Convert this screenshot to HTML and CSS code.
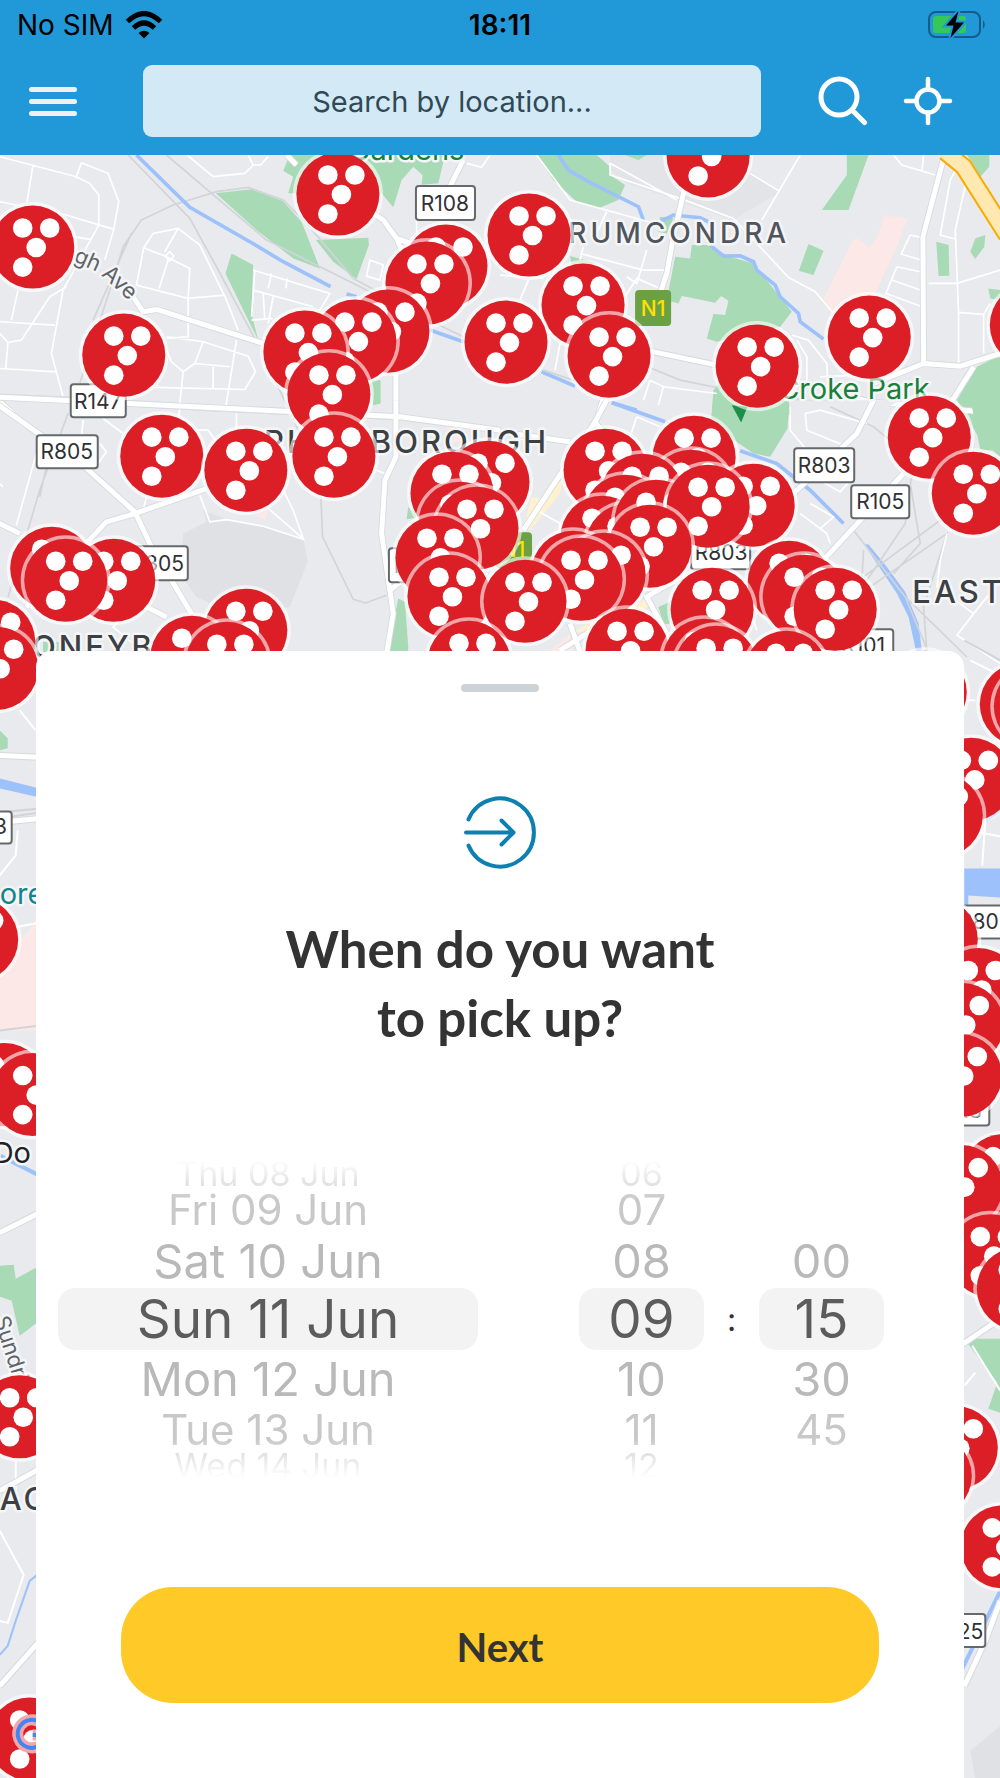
FILE: index.html
```html
<!DOCTYPE html>
<html lang="en">
<head>
<meta charset="utf-8">
<meta name="viewport" content="width=device-width, initial-scale=1">
<title>Pick up time</title>
<link rel="stylesheet" href="styles.css">
</head>
<body>
<div class="app">
  <header class="topbar">
    <div class="status">
      <div class="status-left">
        <span>No SIM</span>
        <svg width="38" height="28" viewBox="0 0 38 28" aria-hidden="true">
          <path d="M19 27.500L13.500 22Q19 17.500 24.500 22Z"/>
          <path class="arc" d="M2.500 10.500Q19 -5.500 35.500 10.500M8.500 17Q19 7 29.500 17"/>
        </svg>
      </div>
      <span class="clock">18:11</span>
      <div class="status-right">
        <svg width="56" height="30" viewBox="0 0 56 30" aria-hidden="true">
          <rect x="2" y="2" width="51" height="25" rx="7" fill="none" stroke="#155d87" stroke-width="2"/>
          <path d="M56 10Q59.500 14.500 56 19Z" fill="#155d87"/>
          <rect x="6" y="6" width="33" height="17" rx="3" fill="#34c759"/>
          <path d="M31.500 1L19 15.500H26.500L23.500 28L37 12.500H28.500Z" fill="#000" stroke="#2199d8" stroke-width="4" paint-order="stroke"/>
        </svg>
      </div>
    </div>
    <div class="searchbar">
      <button class="icon-button" type="button" aria-label="Menu">
        <svg width="48" height="30" viewBox="0 0 48 30"><path d="M2.500 3.500H45.500M2.500 15.500H45.500M2.500 27.500H45.500" stroke="#f0f0f0" stroke-width="5" stroke-linecap="round"/></svg>
      </button>
      <input class="search" type="text" aria-label="Search by location" placeholder="Search by location...">
      <div class="actions">
        <button class="icon-button" type="button" aria-label="Search">
          <svg width="50" height="50" viewBox="0 0 50 50" fill="none" stroke="#fff" stroke-width="5" stroke-linecap="round"><circle cx="21" cy="21" r="18"/><path d="M34.500 34.500L46.500 46.500"/></svg>
        </button>
        <button class="icon-button" type="button" aria-label="My location">
          <svg width="50" height="50" viewBox="0 0 50 50" fill="none" stroke="#fff" stroke-width="4.500" stroke-linecap="round"><circle cx="25" cy="25" r="11.500"/><path d="M25 3V13M25 37V47M3 25H13M37 25H47"/></svg>
        </button>
      </div>
    </div>
  </header>

  <main class="stage">
    <svg class="map" viewBox="0 155 1000 1623" preserveAspectRatio="xMidYMin slice" aria-label="Map of pick-up points">
      <defs>
        <g id="pin">
          <circle r="45" fill="#fff" opacity=".6"/>
          <circle r="41.500" fill="#dc1f26"/>
          <g fill="#fff"><circle cx="-10" cy="-19" r="9.800"/><circle cx="17" cy="-19" r="9.800"/><circle cx="3.500" cy="0.500" r="9.800"/><circle cx="-10" cy="20" r="9.800"/></g>
        </g>
      </defs>
      <rect y="155" width="1000" height="1623" fill="#e8eaed"/>

      <!-- north west -->
      <g transform="translate(0 150) scale(.33333)">
        <path class="park" d="M648 130L755 118L848 152L905 215L960 355L880 325L770 240ZM948 270L1105 263L1107 285L1070 387L1000 335ZM695 310L760 345L755 490L775 570L750 520L677 370ZM870 15L850 62L880 80L865 130H1145L1180 172L1205 90L1240 50L1268 75L1265 104L1315 100L1335 15ZM1110 690L1142 690V760L1120 765Z"/>
        <path class="rail" d="M385 15L570 205L650 350L770 575M500 15L800 270L1100 420L1390 560M240 700L330 420L370 290L425 210L520 165L650 125L745 112L850 150L920 220L1060 385L1180 450M280 510L395 250M830 700L900 850"/>
        <path class="river" d="M410 15L570 172L750 275L850 335L992 410M1040 432L1070 440M1290 540L1390 575"/>
        <path class="street" d="M0 20L230 80L270 100L297 135V225L275 265L190 420L155 610L190 740M100 45L82 155M245 38L228 85M245 38L325 70L357 155L342 238L315 330M0 155L200 195L342 238M0 230L275 268M0 515L165 525M0 655L170 665M55 420L35 510M200 410L150 440L65 570L25 577L0 550M25 577L18 655M562 15L640 80L735 70L760 45L745 15M760 45L782 45L805 20M432 293L460 250L535 235L600 285L680 450L715 540M432 293L410 405L565 445V560L500 565M432 293L495 318L570 355L565 445L675 435M505 330L478 415M495 305L535 235M510 305L522 318L510 332L496 318ZM500 560L610 575L585 640L550 665L515 635L500 600M610 575L745 618L767 665L735 718L400 710M585 640L690 650M640 650V715M710 570L678 770M550 665L540 760M760 360L990 430L960 480M760 420L940 470M765 360L755 500M790 430L795 510M820 440L805 520M815 370L805 415M862 385L858 415M755 510L820 505M1110 330L1150 345L1140 390L1100 378ZM1250 210V260M1400 40L1445 52L1470 15"/>
        <path class="casing" d="M-20 740L230 750L650 775L1200 800M400 440L430 485L470 478L790 580M860 15L890 45M1120 190L1150 210L1190 265L1260 290M1190 265L1225 350M1390 30L1350 110M1188 670V800M0 755L40 790"/>
        <path class="road" d="M-20 740L230 750L650 775L1200 800M400 440L430 485L470 478L790 580M860 15L890 45M1120 190L1150 210L1190 265L1260 290M1190 265L1225 350M1390 30L1350 110M1188 670V800M0 755L40 790"/>
      </g>

      <!-- north east -->
      <g transform="translate(500 150) scale(.33333)">
        <path d="M330 15H700L745 60L840 125L700 210L380 100L330 60Z" fill="#e2e4e7"/>
        <path class="park" d="M110 15H290L330 50V75L375 105L355 150L295 175L230 155L160 90ZM375 15H440L415 30ZM1040 15H1105L1045 180H965L1040 75ZM925 282L970 302L940 375L896 362ZM1308 275L1345 285L1347 377L1315 378ZM1425 265L1455 255L1452 290L1425 327L1410 305ZM1400 15H1467V50L1440 80ZM525 320L570 325L575 285L620 285L690 320L760 340L875 485L840 530L650 575L620 565L640 492L675 495L685 452L663 438L645 458L545 438L535 460L500 450ZM640 720L700 640L830 735L880 780H635ZM1370 750L1430 650L1500 615V920L1440 870ZM1464 415L1500 420V450L1470 445ZM480 200L520 205L500 250L475 245ZM210 318L290 340L215 345Z"/>
        <path class="hospital" d="M1152 195L1222 207L1190 290L1120 440L1000 490L968 450L1058 270L1075 265L1107 292L1132 260Z"/>
        <path class="river" d="M175 15L205 60L265 95L415 170L430 210M480 215L520 195L600 203L630 218M630 285L670 318L720 317L760 335L770 360L825 405L840 440L895 490L900 515L970 567M125 665L225 708M335 757L410 780"/>
        <path class="street" d="M110 15L210 150L480 225M330 40V75L540 145L700 205L865 382L945 425L1000 490M330 40L530 150M900 15L785 210M750 70L840 125M1180 15L1205 45L1305 75M1265 65L1270 15M1230 255L1262 262M1230 255L1203 312L1262 330M1190 350L1260 365M1190 350L1157 430L1260 468M1175 390L1260 420M1390 15L1350 90L1320 255L1365 267M1410 40L1365 240L1375 490V640M1285 400H1370L1500 360M1375 487L1450 493V610M1450 493L1470 460M240 310L430 360L500 360M320 185L290 250M250 290L240 330M440 300L410 400L380 380M85 390L60 450M375 440L410 385L490 420M0 375L130 385M180 580L165 660M450 690L490 710L650 730M450 690L430 750M490 710L475 765M875 555L925 570L980 640L985 780M890 570L920 620V700M960 680L1170 670"/>
        <path class="rail" d="M455 655L540 690L650 712M130 660L250 700M1020 770L880 745"/>
        <path class="casing" d="M555 110L520 260L500 370L480 430M1330 25L1268 260L1270 640L1120 700M1270 640L1380 648L1500 610M450 603L650 645M1420 650L1350 760M310 745L295 790M1050 740L1110 755L1500 790"/>
        <path class="road" d="M555 110L520 260L500 370L480 430M1330 25L1268 260L1270 640L1120 700M1270 640L1380 648L1500 610M450 603L650 645M1420 650L1350 760M310 745L295 790M1050 740L1110 755L1500 790"/>
        <path class="highway-edge" d="M1335 5L1390 50L1520 255"/>
        <path class="highway" d="M1335 5L1390 50L1520 255"/>
      </g>

      <!-- south west -->
      <g transform="translate(0 400) scale(.33333)">
        <path d="M610 330L680 358L790 378L912 420L923 485L870 620L700 640L590 590L540 520L550 400L620 365Z" fill="#e0e1e5"/>
        <path class="park" d="M1195 595L1215 605L1225 740L1222 790H1162L1175 690ZM1225 320L1260 350L1220 357ZM130 725L190 725V760H130Z"/>
        <path class="hospital" d="M765 345L805 330L797 360ZM1340 80H1400L1390 120L1350 130Z"/>
        <path class="rail" d="M205 40L120 270L25 590M140 200L120 290M963 290L968 410L1060 597L1097 608L1160 585"/>
        <path class="street" d="M110 160L50 375M310 55L370 100M300 130L320 155L295 190M250 60L245 110M540 25L530 90L625 90L660 140M600 285L630 365L680 358L790 378L912 418M800 320L910 415L880 330L850 270M440 290L430 330M710 40V90M1130 210L1155 220M420 590L340 680L400 730M0 250L10 260"/>
        <path class="casing" d="M-10 10L250 195L405 335L455 440L575 640M-10 365L60 400M-20 -10L1200 50L1500 90M620 265L405 340L320 365L230 460L80 620M400 600L500 650M1188 0V170L1155 240L1145 400L1180 640L1155 790M1170 570L1220 530"/>
        <path class="road" d="M-10 10L250 195L405 335L455 440L575 640M-10 365L60 400M-20 -10L1200 50L1500 90M620 265L405 340L320 365L230 460L80 620M400 600L500 650M1188 0V170L1155 240L1145 400L1180 640L1155 790M1170 570L1220 530"/>
      </g>

      <!-- south east -->
      <g transform="translate(500 400) scale(.33333)">
        <path class="park" d="M640 0H1000L865 45L862 85L810 170L760 160L630 70ZM1415 20L1440 0H1500V150L1440 150ZM475 620L510 605V670L490 672Z"/>
        <path class="local" d="M95 290L120 295L190 235L180 280L90 390L70 380ZM380 630L440 595L450 615L400 650ZM210 700L280 660L270 690Z"/>
        <path class="hospital" d="M145 755L210 700L220 755Z"/>
        <path d="M865 0H1200L990 120L880 100Z" fill="#e8eaed"/>
        <path class="river" d="M335 8L495 65M720 152L830 190L930 270L1030 370"/>
        <path d="M1092 432L1105 433L1160 500L1215 575L1255 670L1265 755H1248L1225 650L1190 580Z" fill="#9dc1fa"/>
        <path class="rail" d="M990 20L1120 80L1240 180L1215 370L1100 540M1060 390L1215 590L1290 770M1090 530L1320 360M1110 560L1340 400L1270 620L1280 760M1090 450L1085 540M1230 250L1260 430L1180 520M1215 590L1400 770"/>
        <path class="street" d="M0 95L120 135M410 50L390 110M410 50L480 80M110 330L180 370L180 400M870 20V90L920 150M915 40L920 90L1030 135M915 40L960 30L1100 70M940 230L1020 275L1050 240M900 340L980 400L990 430M930 310L1000 350L960 385M1340 400L1320 480L1310 560L1420 640L1370 705L1500 790M1420 640L1500 540M760 660L770 690"/>
        <path class="casing" d="M320 0L285 65L70 390M285 65L310 100M0 95L210 125M1120 0L1070 100L880 280M1210 220L960 490M560 520L440 590L500 700M340 650L180 750M210 670L240 755"/>
        <path class="road" d="M320 0L285 65L70 390M285 65L310 100M0 95L210 125M1120 0L1070 100L880 280M1210 220L960 490M560 520L440 590L500 700M340 650L180 750M210 670L240 755"/>
        <path d="M695 15L723 67L742 20Z" fill="#1e8e4a"/>
      </g>

      <!-- strips beside the sheet -->
      <g>
        <path class="hospital" d="M32 926L40 910V1030H0V965Z"/>
        <path class="park" d="M0 730L8 738V748L0 750ZM0 1265L14 1264L16 1278L40 1265V1320L20 1335L12 1300L0 1296ZM964 1338H1000V1412L988 1408L997 1382Z"/>
        <path d="M964 868H1000V897L968 895V905H964Z" fill="#9dc1fa"/>
        <path class="water-edge" d="M0 778L40 788V797L0 788Z"/>
        <path class="river thin" d="M0 1155L40 1175M960 1672L1000 1590M985 820L1000 810"/>
        <path class="river brook" d="M0 1654L8 1645L16 1620L30 1580L40 1572"/>
        <path d="M970 1750L1000 1725V1778H975Z" fill="#dfe1e5"/>
        <path class="street thin" d="M20 710L36 730M18 830L16 855L0 875M0 930L40 922M0 1530L24 1574L8 1622L0 1620M16 1460V1490M970 830L1000 836M985 820L982 865M964 1385L975 1372M972 1345L1000 1390M975 700H964M970 660L1000 675"/>
        <path class="rail thin" d="M0 812L40 808M0 818L40 812M0 1030L40 1025M964 640L1000 660"/>
        <path class="casing thin" d="M0 755L40 757M0 822L40 818M0 1232L40 1212M0 1490L40 1468M0 1685L40 1640M960 1345L1000 1318M964 1685L985 1640L1000 1600"/>
        <path class="road thin" d="M0 755L40 757M0 822L40 818M0 1232L40 1212M0 1490L40 1468M0 1685L40 1640M960 1345L1000 1318M964 1685L985 1640L1000 1600"/>
      </g>

      <g class="labels">
        <text class="green" x="349" y="160">Gardens</text>
        <text class="green" x="778" y="399">Croke Park</text>
        <text class="teal" x="0" y="904">ore</text>
        <text class="district" x="790" y="243" text-anchor="end">DRUMCONDRA</text>
        <text class="area" x="549" y="453" text-anchor="end">PHIBSBOROUGH</text>
        <text class="area" x="912" y="603">EAST WALL</text>
        <text class="area" x="-13" y="658">STONEYBATTER</text>
        <text class="area" x="0" y="1509">AC</text>
        <text class="place" x="-7" y="1162">Do</text>
        <text class="street-name" transform="translate(73 261) rotate(24)">gh</text>
        <text class="street-name" transform="translate(101 275) rotate(42)">Ave</text>
        <text class="street-name" transform="translate(-6 1318) rotate(72)">Sundri</text>
      </g>

      <g class="shields">
        <rect x="416" y="186" width="59" height="34" rx="3"/><text x="445" y="211">R108</text>
        <rect x="71" y="384" width="55" height="33" rx="3"/><text x="98" y="409">R147</text>
        <rect x="37" y="435" width="61" height="33" rx="3"/><text x="67" y="459">R805</text>
        <rect x="127" y="546" width="61" height="34" rx="3"/><text x="158" y="571">R805</text>
        <rect x="389" y="548" width="61" height="34" rx="3"/><text x="420" y="573">R805</text>
        <rect x="794" y="448" width="60" height="34" rx="3"/><text x="824" y="473">R803</text>
        <rect x="851" y="485" width="58" height="33" rx="3"/><text x="880" y="509">R105</text>
        <rect x="691" y="535" width="59" height="34" rx="3"/><text x="721" y="560">R803</text>
        <rect x="834" y="629" width="59" height="34" rx="3"/><text x="863" y="653">R101</text>
        <rect x="-48" y="811" width="60" height="32" rx="3"/><text x="-19" y="834">R803</text>
        <rect x="948" y="905" width="62" height="33" rx="3"/><text x="985" y="929">R802</text>
        <rect x="930" y="1092" width="59" height="33" rx="3"/><text x="960" y="1117">R118</text>
        <rect x="925" y="1613" width="60" height="33" rx="3"/><text x="957" y="1638">R825</text>
        <g class="national"><rect x="635" y="290" width="36" height="36" rx="4"/><text x="653" y="316">N1</text></g>
        <g class="national"><rect x="496" y="532" width="36" height="36" rx="4"/><text x="513" y="557">N1</text></g>
      </g>

      <g>
        <use href="#pin" x="33" y="247"/><use href="#pin" x="338" y="194"/><use href="#pin" x="124" y="355"/>
        <use href="#pin" x="446" y="266"/><use href="#pin" x="427" y="283"/><use href="#pin" x="388" y="331"/>
        <use href="#pin" x="355" y="341"/><use href="#pin" x="305" y="352"/><use href="#pin" x="329" y="394"/>
        <use href="#pin" x="529" y="235"/><use href="#pin" x="708" y="156"/><use href="#pin" x="583" y="305"/>
        <use href="#pin" x="506" y="342"/><use href="#pin" x="609" y="356"/><use href="#pin" x="757" y="366"/>
        <use href="#pin" x="869" y="337"/><use href="#pin" x="1031" y="325"/><use href="#pin" x="162" y="456"/>
        <use href="#pin" x="246" y="470"/><use href="#pin" x="334" y="456"/>
        <use href="#pin" x="52" y="568"/><use href="#pin" x="114" y="580"/><use href="#pin" x="66" y="580"/>
        <use href="#pin" x="-6" y="641"/><use href="#pin" x="-3" y="668"/>
        <use href="#pin" x="246" y="630"/><use href="#pin" x="192" y="657"/><use href="#pin" x="227" y="663"/>
        <use href="#pin" x="488" y="482"/><use href="#pin" x="452" y="493"/><use href="#pin" x="460" y="523"/>
        <use href="#pin" x="477" y="528"/><use href="#pin" x="437" y="557"/><use href="#pin" x="449" y="596"/>
        <use href="#pin" x="605" y="470"/><use href="#pin" x="694" y="457"/><use href="#pin" x="691" y="491"/>
        <use href="#pin" x="642" y="495"/><use href="#pin" x="625" y="516"/><use href="#pin" x="602" y="537"/><use href="#pin" x="627" y="545"/>
        <use href="#pin" x="656" y="521"/>
        <use href="#pin" x="753" y="505"/><use href="#pin" x="708" y="506"/><use href="#pin" x="650" y="546"/>
        <use href="#pin" x="573" y="572"/><use href="#pin" x="604" y="574"/><use href="#pin" x="581" y="579"/>
        <use href="#pin" x="525" y="601"/><use href="#pin" x="469" y="662"/>
        <use href="#pin" x="789" y="582"/><use href="#pin" x="712" y="609"/><use href="#pin" x="804" y="596"/><use href="#pin" x="835" y="609"/>
        <use href="#pin" x="627" y="650"/><use href="#pin" x="704" y="660"/><use href="#pin" x="716" y="667"/><use href="#pin" x="786" y="672"/>
        <use href="#pin" x="929" y="437"/><use href="#pin" x="973" y="493"/>
        <use href="#pin" x="925" y="692"/><use href="#pin" x="1021" y="704"/><use href="#pin" x="1035" y="706"/>
        <use href="#pin" x="971" y="779"/><use href="#pin" x="941" y="815"/><use href="#pin" x="936" y="939"/>
        <use href="#pin" x="1033" y="985"/><use href="#pin" x="978" y="989"/><use href="#pin" x="962" y="1024"/><use href="#pin" x="960" y="1075"/>
        <use href="#pin" x="1003" y="1175"/><use href="#pin" x="961" y="1186"/><use href="#pin" x="990" y="1255"/><use href="#pin" x="1018" y="1288"/>
        <use href="#pin" x="956" y="1447"/><use href="#pin" x="930" y="1475"/><use href="#pin" x="1002" y="1546"/>
        <use href="#pin" x="-23" y="939"/><use href="#pin" x="5" y="1084"/><use href="#pin" x="33" y="1094"/>
        <use href="#pin" x="20" y="1416"/><use href="#pin" x="30" y="1738"/>
      </g>
      <path d="M42 1723A14 14 0 1 0 46 1734H33" fill="none" stroke="#f3a6ab" stroke-width="11"/>
      <path d="M42 1723A14 14 0 1 0 46 1734H33" fill="none" stroke="#4285f4" stroke-width="4"/>
    </svg>

    <form class="sheet">
      <div class="handle"></div>
      <svg class="pickup" width="76" height="76" viewBox="0 0 76 76" fill="none" stroke="#0d7fb1" stroke-width="4" stroke-linecap="round" stroke-linejoin="round" aria-hidden="true">
        <path d="M6.500 25.500A34 34 0 1 1 6.500 51.500"/><path d="M4 38.500H51M39.500 26.500L51.500 38.500L39.500 50.500"/>
      </svg>
      <h1>When do you want<br>to pick up?</h1>
      <div class="picker">
        <fieldset class="wheel wheel-date" aria-label="Date">
          <label class="far"><input type="radio" name="date">Thu 08 Jun</label>
          <label class="mid"><input type="radio" name="date">Fri 09 Jun</label>
          <label class="near"><input type="radio" name="date">Sat 10 Jun</label>
          <label class="current"><input type="radio" name="date" checked>Sun 11 Jun</label>
          <label class="near"><input type="radio" name="date">Mon 12 Jun</label>
          <label class="mid"><input type="radio" name="date">Tue 13 Jun</label>
          <label class="far"><input type="radio" name="date">Wed 14 Jun</label>
        </fieldset>
        <fieldset class="wheel" aria-label="Hour">
          <label class="far"><input type="radio" name="hour">06</label>
          <label class="mid"><input type="radio" name="hour">07</label>
          <label class="near"><input type="radio" name="hour">08</label>
          <label class="current"><input type="radio" name="hour" checked>09</label>
          <label class="near"><input type="radio" name="hour">10</label>
          <label class="mid"><input type="radio" name="hour">11</label>
          <label class="far"><input type="radio" name="hour">12</label>
        </fieldset>
        <span class="colon">:</span>
        <fieldset class="wheel wheel-minute" aria-label="Minute">
          <label class="near"><input type="radio" name="minute">00</label>
          <label class="current"><input type="radio" name="minute" checked>15</label>
          <label class="near"><input type="radio" name="minute">30</label>
          <label class="mid"><input type="radio" name="minute">45</label>
        </fieldset>
      </div>
      <button class="next" type="button">Next</button>
    </form>
  </main>
</div>
</body>
</html>
```
FILE: styles.css
```css
* { box-sizing: border-box; }
body {
  margin: 0;
  font-family: Inter, "Liberation Sans", sans-serif;
  color: #333;
}
svg { display: block; }
button, input { font: inherit; }

.app {
  min-height: 100vh;
  display: flex;
  flex-direction: column;
}

/* top bar */
.topbar { background: #2199d8; padding-bottom: 18px; }
.status {
  display: grid;
  grid-template-columns: 1fr auto 1fr;
  align-items: center;
  height: 50px;
  padding: 0 17px;
  color: #000;
  font-size: 28px;
}
.status-left { display: flex; align-items: center; gap: 11px; }
.status-left .arc { fill: none; stroke: #000; stroke-width: 5; }
.clock { font-weight: 600; }
.status-right { display: flex; justify-content: flex-end; }
.status-right svg { overflow: visible; }
.searchbar {
  display: flex;
  align-items: center;
  padding: 15px 47px 0 29px;
}
.icon-button { padding: 0; border: 0; background: none; }
.search {
  flex: 1;
  min-width: 0;
  height: 72px;
  margin: 0 57px 0 66px;
  padding: 0 16px;
  border: 0;
  border-radius: 9px;
  background: #d3eaf6;
  color: #2f4957;
  font-size: 29px;
  text-align: center;
}
.search::placeholder { color: #2f4957; opacity: 1; }
.actions { display: flex; gap: 35px; }

/* map */
.stage {
  position: relative;
  flex: 1;
  padding: 496px 36px 0;
  overflow: hidden;
}
.map {
  position: absolute;
  inset: 0;
  width: 100%;
  height: 100%;
}
.park { fill: #a8dab5; }
.hospital { fill: #fce8e6; }
.local { fill: #fef1cf; }
.water-edge { fill: #9dc1fa; }
.river, .street, .rail, .casing, .road, .highway, .highway-edge { fill: none; }
.river { stroke: #9dc1fa; stroke-width: 11; }
.street { stroke: #fff; stroke-width: 5; }
.rail { stroke: #d2d4d8; stroke-width: 5; }
.casing { stroke: #d6d9de; stroke-width: 20; }
.road { stroke: #fff; stroke-width: 15; }
.highway-edge { stroke: #f9ab00; stroke-width: 56; }
.highway { stroke: #ffe9b0; stroke-width: 44; }
.street.thin, .rail.thin, .river.brook { stroke-width: 2; }
.river.thin { stroke-width: 4; }
.casing.thin { stroke-width: 7; }
.road.thin { stroke-width: 5; }
.labels text {
  font-size: 29px;
  fill: #3c4043;
  stroke: #f4f5f7;
  stroke-width: 5px;
  stroke-linejoin: round;
  paint-order: stroke;
}
.labels .green { fill: #188038; }
.labels .teal { fill: #12858c; }
.labels .district { font-size: 28px; fill: #50555b; font-weight: 500; letter-spacing: 4px; }
.labels .area { font-size: 31px; font-weight: 500; letter-spacing: 3px; }
.labels .place { fill: #202124; }
.labels .street-name { font-size: 22px; fill: #5f6368; }
.shields rect { fill: #fff; stroke: #66696c; stroke-width: 2; }
.shields text { font-size: 21px; fill: #303134; text-anchor: middle; }
.shields .national rect { fill: #6ba043; stroke: none; }
.shields .national text { fill: #ffe000; font-weight: 500; }

/* bottom sheet */
.sheet {
  position: relative;
  display: flex;
  flex-direction: column;
  align-items: center;
  min-height: 100%;
  padding: 33px 0 76px;
  border-radius: 16px 16px 0 0;
  background: #fff;
}
.handle { width: 78px; height: 8px; border-radius: 4px; background: #cdd3d6; }
.pickup { margin-top: 102px; }
h1 {
  margin: 44px 0 0;
  font: 700 51px/69px Lato, "Open Sans", sans-serif;
  text-align: center;
}
.picker {
  align-self: stretch;
  display: grid;
  grid-template-columns: minmax(0, 1fr) 125px 55px 125px;
  align-items: center;
  margin-top: 108px;
  padding: 0 80px 0 22px;
}
.wheel {
  min-width: 0;
  height: 318px;
  margin: 0;
  padding: 0;
  border: 0;
  overflow: hidden;
  -webkit-mask-image: linear-gradient(transparent, #000 40px, #000 278px, transparent);
  mask-image: linear-gradient(transparent, #000 40px, #000 278px, transparent);
}
.wheel-date { margin-right: 101px; }
.wheel-minute { padding-top: 72px; }
.wheel label {
  display: flex;
  align-items: center;
  justify-content: center;
  white-space: nowrap;
}
.wheel input { position: absolute; opacity: 0; pointer-events: none; }
.far { height: 26px; font-size: 34px; color: #cfcfcf; }
.mid { height: 46px; font-size: 42px; color: #c8c8c8; }
.near { height: 56px; font-size: 47px; color: #b9b9b9; }
.current {
  height: 62px;
  border-radius: 17px;
  background: #f3f3f3;
  color: #5c5c5c;
  font-size: 53px;
}
.colon { text-align: center; font-size: 32px; }
.next {
  width: calc(100% - 170px);
  height: 116px;
  margin-top: 109px;
  padding: 4px 0 0;
  border: 0;
  border-radius: 52px;
  background: #ffca28;
  color: #333;
  font: 700 40px Lato, "Open Sans", sans-serif;
}
```
